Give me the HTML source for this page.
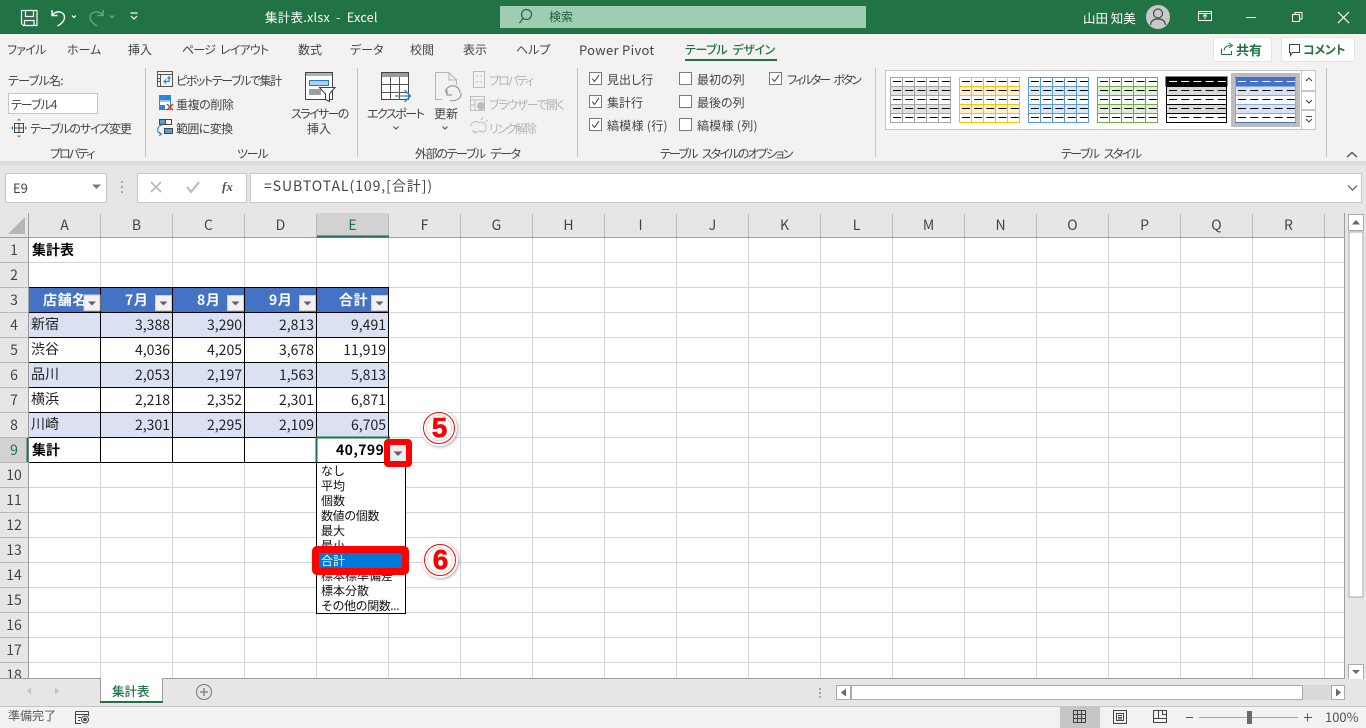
<!DOCTYPE html>
<html lang="ja"><head><meta charset="utf-8"><title>集計表.xlsx - Excel</title>
<style>
html,body{margin:0;padding:0;width:1366px;height:728px;overflow:hidden;background:#fff}
body{position:relative;font-family:"Liberation Sans","Noto Sans CJK JP",sans-serif;font-size:12px;color:#444}
.j,.t{font-family:"Noto Sans CJK JP",sans-serif;font-feature-settings:"palt"}
.t{position:absolute;white-space:nowrap;line-height:16px;height:16px}
.r{position:absolute;left:0;top:0}
.b{position:absolute}
.g{color:#b4b4b4}
.w{color:#fff}
.c{font-size:14px;color:#222;line-height:25px;height:25px;font-feature-settings:normal}
.n{text-align:right}
.h{font-weight:700;color:#fff;font-size:14px;line-height:24px;height:24px;font-feature-settings:normal;text-align:center;letter-spacing:.6px}
.k{font-size:14px;color:#444;text-align:center;line-height:24px;height:24px;font-family:"Noto Sans CJK JP",sans-serif}
.m{font-size:12px;color:#111;line-height:15px;height:15px;left:321px;font-feature-settings:normal}
</style></head><body>

<div class="b" style="left:0;top:0;width:1366px;height:34px;background:#217346"></div>
<div class="b" style="left:500px;top:6px;width:366px;height:22px;background:#9fcdb3"></div>
<div class="b" style="left:0;top:34px;width:1366px;height:127px;background:#f3f2f1"></div>
<div class="b" style="left:0;top:161px;width:1366px;height:52px;background:#e6e6e6"></div>
<div class="b" style="left:0;top:161px;width:1366px;height:4px;background:#dcdcdc"></div>
<div class="b" style="left:5px;top:173px;width:100px;height:28px;background:#fff;border:1px solid #c8c8c8"></div>
<div class="b" style="left:137px;top:173px;width:108px;height:28px;background:#fff;border:1px solid #c8c8c8"></div>
<div class="b" style="left:250px;top:173px;width:1110px;height:28px;background:#fff;border:1px solid #c8c8c8"></div>
<div class="b" style="left:8px;top:93px;width:88px;height:19px;background:#fff;border:1px solid #c6c6c6"></div>
<div class="b" style="left:1213px;top:37px;width:57px;height:23px;background:#fff;border:1px solid #e4e4e4;border-radius:2px"></div>
<div class="b" style="left:1281px;top:37px;width:72px;height:23px;background:#fff;border:1px solid #e4e4e4;border-radius:2px"></div>

<!-- sheet backgrounds -->
<div class="b" style="left:0;top:213px;width:1345px;height:24px;background:#e6e6e6"></div>
<div class="b" style="left:0;top:237px;width:28px;height:442px;background:#e6e6e6"></div>
<div class="b" style="left:317px;top:213px;width:71px;height:24px;background:#d2d2d2"></div>
<div class="b" style="left:0;top:438px;width:28px;height:24px;background:#d2d2d2"></div>
<div class="b" style="left:29px;top:288px;width:359px;height:24px;background:#4472c4"></div>
<div class="b" style="left:29px;top:313px;width:359px;height:24px;background:#d9e1f2"></div>
<div class="b" style="left:29px;top:363px;width:359px;height:24px;background:#d9e1f2"></div>
<div class="b" style="left:29px;top:413px;width:359px;height:24px;background:#d9e1f2"></div>

<svg class="r" width="1366" height="728" viewBox="0 0 1366 728" fill="none">
<!-- grid -->
<path stroke="#d4d4d4" d="M100.5 237V679M172.5 237V679M244.5 237V679M316.5 237V679M388.5 237V679M460.5 237V679M532.5 237V679M604.5 237V679M676.5 237V679M748.5 237V679M820.5 237V679M892.5 237V679M964.5 237V679M1036.5 237V679M1108.5 237V679M1180.5 237V679M1252.5 237V679M1324.5 237V679M28 262.5H1345M28 287.5H1345M28 312.5H1345M28 337.5H1345M28 362.5H1345M28 387.5H1345M28 412.5H1345M28 437.5H1345M28 462.5H1345M28 487.5H1345M28 512.5H1345M28 537.5H1345M28 562.5H1345M28 587.5H1345M28 612.5H1345M28 637.5H1345M28 662.5H1345"/>
<!-- header separators -->
<path stroke="#b8b8b8" d="M100.5 214V237M172.5 214V237M244.5 214V237M316.5 214V237M388.5 214V237M460.5 214V237M532.5 214V237M604.5 214V237M676.5 214V237M748.5 214V237M820.5 214V237M892.5 214V237M964.5 214V237M1036.5 214V237M1108.5 214V237M1180.5 214V237M1252.5 214V237M1324.5 214V237M0 262.5H28M0 287.5H28M0 312.5H28M0 337.5H28M0 362.5H28M0 387.5H28M0 412.5H28M0 437.5H28M0 462.5H28M0 487.5H28M0 512.5H28M0 537.5H28M0 562.5H28M0 587.5H28M0 612.5H28M0 637.5H28M0 662.5H28"/>
<path stroke="#9d9d9d" d="M28.5 213V679M0 237.5H1345"/>
<path fill="#b5b5b5" d="M25 217V234H8Z"/>
<path stroke="#217346" stroke-width="2" d="M317 236.5H389M27.5 438V462"/>
<!-- table lines -->
<path stroke="#000" d="M29 287.5H389M29 312.5H389M29 337.5H389M29 362.5H389M29 387.5H389M29 412.5H389M29 437.5H316M29 462.5H389M100.5 287V463M172.5 287V463M244.5 287V463M316.5 287V463M388.5 287V463"/>
<path stroke="#217346" stroke-width="2" d="M316 437.5H390M316.5 437V462"/>
<!-- right edge -->
<path stroke="#9d9d9d" d="M1344.5 213V679"/>

<!-- title bar icons -->
<g stroke="#fff" stroke-width="1.2">
<path d="M21.5 10.5H37V25.5H23.5L21.5 23.5Z"/><path d="M25.5 10.5V16.5H33.5V10.5M24.5 25.5V20.5H34V25.5"/>
<path d="M52 10V15.5H57.5M52.5 15C55 10.5 64.5 10.5 64.5 17.5C64.5 21 61 24 57.5 26" stroke-width="1.4"/>
<path d="M72 15.5L74 17.5L76 15.5M131 16L134 19L137 16M130.5 13H137.5"/>
</g>
<g stroke="#6ea587" stroke-width="1.3"><path d="M103 10V15.5H97.5M102.5 15C100 10.5 90 10.5 90 17.5C90 21 93.5 24 97 26M110 15.5L112 17.5L114 15.5"/></g>
<circle cx="526.5" cy="14.5" r="5" stroke="#1d6a40" stroke-width="1.2"/><path d="M523 18.5L519.5 23" stroke="#1d6a40" stroke-width="1.3"/>
<circle cx="1158" cy="17" r="12" fill="#c8c8c8"/>
<circle cx="1158" cy="13.5" r="4.5" stroke="#4a4a4a" stroke-width="1.2"/><path d="M1150.5 25C1151 20.5 1154 19 1158 19C1162 19 1165 20.5 1165.5 25" stroke="#4a4a4a" stroke-width="1.2"/>
<g stroke="#fff"><path d="M1198.5 11.5H1211.5V20.5H1198.5ZM1198 13.5H1212M1205 19V15M1203 16.5L1205 14.5L1207 16.5"/><path d="M1246 17.5H1256"/><path d="M1292.5 14.5H1299.5V21.5H1292.5ZM1295 14V12.5H1302V19H1300"/><path d="M1338 12L1349 23M1349 12L1338 23" stroke-width="1.2"/></g>
<path d="M685 60H777" stroke="#217346" stroke-width="2"/>
<!-- share / comment icons -->
<path stroke="#217346" d="M1221.5 48.5V54.5H1231.5V51M1224 50.5C1224.5 47 1227 45.5 1231 45.5M1229 43L1232.5 45.5L1229 48"/>
<path d="M1289.5 44.5H1299.5V52.5H1292.5L1290.5 55.5V52.5H1289.5Z" stroke="#444"/>
<!-- separators -->
<path stroke="#c6c6c6" d="M145.5 68V157M357.5 68V157M577.5 68V157M875.5 68V157M1326.5 68V157"/>
<path d="M1347 157L1352 152.5L1357 157" stroke="#444" stroke-width="1.2"/>
<!-- table size -->
<path stroke="#444" d="M14.5 123.5H23.5V132.5H14.5ZM14.5 128H23.5M19 123.5V132.5"/>
<path fill="#2b88d8" d="M19 118.5L17 120.5H21ZM19 137.5L17 135.5H21ZM11 128L13 126V130ZM27 128L25 126V130Z"/>
<!-- pivot -->
<path stroke="#555" d="M157.5 71.5H172.5V86.5H157.5ZM157.5 74.5H172.5M160.5 74.5V86.5M160.5 78.5H157.5M160.5 81.5H157.5"/>
<path stroke="#2b88d8" stroke-width="1.2" d="M169 77V81.5H164M166 79.5L164 81.5L166 83.5M167.5 78.5L169 76.8L170.5 78.5"/>
<!-- dup -->
<path d="M159.5 95.5H170.5V109.5H159.5Z" fill="#fff" stroke="#2b88d8"/><path fill="#2b88d8" d="M160 96H170V100H160ZM160 105H165V109H160Z"/><path stroke="#2b88d8" d="M159.5 101H170.5"/>
<path stroke="#e0301e" stroke-width="1.4" d="M167 104L173 110M173 104L167 110"/>
<!-- convert -->
<path d="M159.5 119.5H171.5V124.5H159.5ZM165.5 119.5V124.5" stroke="#444"/><path fill="#5a9bd5" d="M160 120H165V124H160Z"/><path d="M164.5 128.5H172.5V133.5H164.5Z" fill="#5a9bd5" stroke="#444"/>
<path stroke="#2b88d8" stroke-width="1.1" d="M162 125C157 126 156 132 161 134M159 136L161.5 134L159 132"/>
<!-- slicer -->
<path d="M305.5 72.5H332.5V99.5H305.5Z" fill="#fff" stroke="#444"/><path fill="#b0b0b0" d="M306 73H332V76H306Z"/>
<path d="M309.5 80.5H328.5V85.5H309.5Z" fill="#a9d1f0" stroke="#2b79c2"/><path fill="#a0a0a0" d="M309 89H321V95H309Z"/>
<path d="M319.5 87.5H335L329.5 94V101.5L325.5 99.5V94Z" fill="#fff" stroke="#444" stroke-width="1.1"/>
<!-- export -->
<path d="M381.5 72.5H408.5V99.5H381.5Z" fill="#fff" stroke="#444"/><path fill="#9a9a9a" d="M382 73H408V77H382Z"/>
<path stroke="#555" d="M381.5 84.5H408.5M381.5 92.5H408.5M390.5 77V99.5M399.5 77V99.5"/>
<path stroke="#2b88d8" stroke-width="1.3" d="M395 96H410M404.5 90L410.5 96L404.5 102" fill="none"/>
<path stroke="#555" stroke-width="1.1" d="M393.5 126.5L396 129L398.5 126.5M442.5 126.5L445 129L447.5 126.5"/>
<!-- refresh -->
<path stroke="#b4b4b4" d="M435.5 72.5H449L456.5 80V85M449 72.5V80H456.5M435.5 72.5V99.5H442"/>
<path stroke="#9a9a9a" stroke-width="1.2" d="M447 94C443 89 450 85 455 86C458 87 460 90 460 93M447 90V95H452M461 93C462 99 454 102 450 100"/>
<!-- greyed items -->
<g stroke="#bdbdbd"><path d="M473.5 71.5H484.5V87.5H473.5ZM476 76H478M476 82H478M480 76H482M480 82H482"/><path d="M470.5 96.5H484.5V110.5H470.5ZM470.5 100H484.5M475 100V110M470.5 105H475"/>
<path d="M471 126C471 122 476 120 479 123C482 121 487 124 486 128C486 132 482 133 480 131C477 133 473 132 472 130M475 134V131M481 120L483 117M485 122L488 120"/></g>
<circle cx="481" cy="106" r="4" fill="#bdbdbd"/>
<!-- checkboxes -->
<g fill="#fff" stroke="#7a7a7a"><path d="M589.5 72.5H601.5V84.5H589.5ZM589.5 95.5H601.5V107.5H589.5ZM589.5 118.5H601.5V130.5H589.5ZM679.5 72.5H691.5V84.5H679.5ZM679.5 95.5H691.5V107.5H679.5ZM679.5 118.5H691.5V130.5H679.5ZM769.5 72.5H781.5V84.5H769.5Z"/></g>
<g stroke="#555" stroke-width="1.1"><path d="M592 78.5L594.5 81.5L599 75M592 101.5L594.5 104.5L599 98M592 124.5L594.5 127.5L599 121M772 78.5L774.5 81.5L779 75"/></g>
<!-- gallery -->
<path d="M885.5 70.5H1301.5V129.5H885.5Z" fill="#fff" stroke="#c6c6c6"/>
<rect x="1231" y="73" width="69" height="54" fill="#bdbdbd"/>
<g stroke="#a5a5a5"><path fill="#e2e2e2" d="M890 86H951V95H890ZM890 104H951V113H890Z" stroke="none"/><path d="M890.5 77.5H950.5V122.5H890.5ZM890.5 86.5H950.5M890.5 95.5H950.5M890.5 104.5H950.5M890.5 113.5H950.5M902.5 77.5V122.5M914.5 77.5V122.5M926.5 77.5V122.5M938.5 77.5V122.5"/></g>
<g stroke="#ffc000"><path fill="#fff0c8" d="M959 86H1020V95H959ZM959 104H1020V113H959Z" stroke="none"/><path d="M959.5 77.5H1019.5V122.5H959.5ZM959.5 86.5H1019.5M959.5 95.5H1019.5M959.5 104.5H1019.5M959.5 113.5H1019.5M971.5 77.5V122.5M983.5 77.5V122.5M995.5 77.5V122.5M1007.5 77.5V122.5"/></g>
<g stroke="#5b9bd5"><path fill="#dbe9f6" d="M1028 86H1089V95H1028ZM1028 104H1089V113H1028Z" stroke="none"/><path d="M1028.5 77.5H1088.5V122.5H1028.5ZM1028.5 86.5H1088.5M1028.5 95.5H1088.5M1028.5 104.5H1088.5M1028.5 113.5H1088.5M1040.5 77.5V122.5M1052.5 77.5V122.5M1064.5 77.5V122.5M1076.5 77.5V122.5"/></g>
<g stroke="#70ad47"><path fill="#e1eed8" d="M1097 86H1158V95H1097ZM1097 104H1158V113H1097Z" stroke="none"/><path d="M1097.5 77.5H1157.5V122.5H1097.5ZM1097.5 86.5H1157.5M1097.5 95.5H1157.5M1097.5 104.5H1157.5M1097.5 113.5H1157.5M1109.5 77.5V122.5M1121.5 77.5V122.5M1133.5 77.5V122.5M1145.5 77.5V122.5"/></g>
<g stroke="#000"><path fill="#000" d="M1166 77H1227V86H1166Z"/><path fill="#d9d9d9" d="M1166 87H1227V95H1166ZM1166 105H1227V113H1166Z" stroke="none"/><path d="M1166.5 77.5H1226.5V122.5H1166.5ZM1166.5 86.5H1226.5M1166.5 95.5H1226.5M1166.5 104.5H1226.5M1166.5 113.5H1226.5"/></g>
<rect x="1235" y="77" width="61" height="46" fill="#fff"/>
<g stroke="#8ea9db"><path fill="#4472c4" stroke="none" d="M1235 77H1296V86H1235Z"/><path fill="#d9e1f2" d="M1235 87H1296V95H1235ZM1235 105H1296V113H1235Z" stroke="none"/><path d="M1235.5 77.5H1295.5V122.5H1235.5ZM1235.5 86.5H1295.5M1235.5 95.5H1295.5M1235.5 104.5H1295.5M1235.5 113.5H1295.5"/></g>
<path stroke="#4472c4" stroke-width="1" d="M1235 122.5H1296M1235 77.5H1296"/>
<g stroke-dasharray="8 4.2" stroke="#000" stroke-width="1">
<path d="M893 81.5H951M893 90.5H951M893 99.5H951M893 108.5H951M893 117.5H951M962 81.5H1020M962 90.5H1020M962 99.5H1020M962 108.5H1020M962 117.5H1020M1031 81.5H1089M1031 90.5H1089M1031 99.5H1089M1031 108.5H1089M1031 117.5H1089M1100 81.5H1158M1100 90.5H1158M1100 99.5H1158M1100 108.5H1158M1100 117.5H1158M1169 90.5H1227M1169 99.5H1227M1169 108.5H1227M1169 117.5H1227M1238 90.5H1296M1238 99.5H1296M1238 108.5H1296M1238 117.5H1296"/>
<path stroke="#fff" d="M1169 81.5H1227M1238 81.5H1296"/>
</g>
<!-- gallery buttons -->
<path d="M1301.5 70.5H1315.5V90.5H1301.5ZM1301.5 91.5H1315.5V109.5H1301.5ZM1301.5 110.5H1315.5V129.5H1301.5Z" fill="#fff" stroke="#c6c6c6"/>
<path stroke="#444" stroke-width="1.1" d="M1306 81L1309 78L1312 81M1306 100L1309 103L1312 100M1306 116.5H1312M1306 119L1309 122L1312 119"/>
<!-- formula bar icons -->
<path fill="#7a7a7a" d="M92 184.5H101L96.5 189Z"/>
<path fill="#a6a6a6" d="M121 181H123V183H121ZM121 186H123V188H121ZM121 191H123V193H121Z"/>
<path stroke="#b8b8b8" stroke-width="1.6" d="M151 182L161 192M161 182L151 192"/>
<path stroke="#b8b8b8" stroke-width="2" d="M187 187L191 192L199 182"/>
<path stroke="#555" stroke-width="1.2" d="M1348 185.5L1352.5 190L1357 185.5"/>
<!-- scrollbars -->
<rect x="1345" y="213" width="21" height="466" fill="#e6e6e6"/>
<rect x="1349" y="232" width="14" height="365" fill="#fff" stroke="#ababab"/>
<rect x="1348.5" y="214.5" width="15" height="16" fill="#fff" stroke="#ababab"/>
<rect x="1348.5" y="664.5" width="15" height="15" fill="#fff" stroke="#ababab"/>
<path fill="#666" d="M1356 220L1352 224.5H1360ZM1356 674L1352 670H1360Z"/>
<rect x="0" y="679" width="1366" height="28" fill="#e6e6e6"/>
<path stroke="#9d9d9d" d="M0 678.5H100M163 678.5H1345"/>
<path stroke="#c6c6c6" d="M0 706.5H1366"/>
<path d="M100.5 678V702M162.5 678V702" stroke="#9d9d9d"/>
<rect x="101" y="678" width="61" height="24" fill="#fff"/>
<rect x="100" y="701" width="63" height="2" fill="#217346"/>
<path fill="#c4c4c4" d="M27 691L31 687.5V694.5ZM59 691L55 687.5V694.5Z"/>
<circle cx="204" cy="692" r="7.5" stroke="#8a8a8a" stroke-width="1.3"/><path stroke="#8a8a8a" stroke-width="1.6" d="M200 692H208M204 688V696"/>
<path fill="#a6a6a6" d="M819 688H821V690H819ZM819 692H821V694H819ZM819 696H821V698H819Z"/>
<rect x="836.5" y="685.5" width="14" height="14" fill="#fff" stroke="#ababab"/>
<rect x="851.5" y="685.5" width="451" height="14" fill="#fff" stroke="#ababab"/>
<rect x="1303" y="685" width="28" height="15" fill="#d9d9d9"/>
<rect x="1331.5" y="685.5" width="13" height="14" fill="#fff" stroke="#ababab"/>
<path fill="#666" d="M841 692.5L846 688.5V696.5ZM1341 692.5L1336 688.5V696.5Z"/>
<!-- status -->
<rect x="0" y="707" width="1366" height="21" fill="#f3f2f1"/>
<rect x="1060" y="707" width="40" height="21" fill="#c6c6c6"/>
<g stroke="#444"><path d="M75.5 711.5H88.5M75.5 711.5V723.5H81M88.5 711.5V716M75.5 714.5H88.5M78 717.5H81M78 720.5H80"/><circle cx="85" cy="719.5" r="3.5"/></g><circle cx="85" cy="719.5" r="1.8" fill="#444"/>
<path stroke="#444" d="M1073.5 710.5H1085.5V722.5H1073.5ZM1073.5 714.5H1085.5M1073.5 718.5H1085.5M1077.5 710.5V722.5M1081.5 710.5V722.5"/>
<path stroke="#444" d="M1113.5 710.5H1126.5V723.5H1113.5ZM1116.5 713.5H1123.5V720.5H1116.5ZM1118 715.5H1122M1118 717.5H1122M1118 719H1122"/>
<path stroke="#444" d="M1153.5 710.5H1166.5V722.5H1153.5ZM1153.5 718.5H1166.5M1158.5 710.5V718.5M1162.5 710.5V714.5H1166.5"/>
<path stroke="#555" d="M1186 717.5H1193M1304 717.5H1312M1307.5 713.5V721.5"/>
<path stroke="#a6a6a6" d="M1199 717.5H1298"/>
<rect x="1247" y="711" width="5" height="13" fill="#6b6b6b"/>
<!-- filter buttons -->
<g fill="#f1f1f6" stroke="#d0d0d0">
<rect x="84" y="295" width="16" height="15.5"/><rect x="155.5" y="295.5" width="16" height="15"/><rect x="227.5" y="295.5" width="16" height="15"/><rect x="299.5" y="295.5" width="16" height="15"/><rect x="371.5" y="295.5" width="16" height="15"/>
</g>
<path fill="#606060" d="M88 301.5H96L92 305.5ZM159.5 301.5H167.5L163.5 305.5ZM231.5 301.5H239.5L235.5 305.5ZM303.5 301.5H311.5L307.5 305.5ZM375.5 301.5H383.5L379.5 305.5Z"/>
</svg>

<!-- title bar text -->
<span class="t w" style="left:265px;top:9px;font-size:12.5px;letter-spacing:.27px">集計表.xlsx&nbsp; -&nbsp; Excel</span>
<span class="t" style="left:549px;top:9px;color:#1d5f3a;font-size:12px">検索</span>
<span class="t w" style="left:1083px;top:10px;font-size:12.5px">山田 知美</span>

<!-- tabs -->
<span class="t" style="left:7px;top:42px;letter-spacing:-.75px">ファイル</span>
<span class="t" style="left:67px;top:42px">ホーム</span>
<span class="t" style="left:128px;top:42px">挿入</span>
<span class="t" style="left:182px;top:42px;letter-spacing:-.8px;word-spacing:3px">ページ レイアウト</span>
<span class="t" style="left:298px;top:42px">数式</span>
<span class="t" style="left:350px;top:42px">データ</span>
<span class="t" style="left:410px;top:42px">校閲</span>
<span class="t" style="left:463px;top:42px">表示</span>
<span class="t" style="left:516px;top:42px">ヘルプ</span>
<span class="t" style="left:579px;top:42px;font-size:13px;letter-spacing:.3px">Power Pivot</span>
<span class="t" style="left:685px;top:42px;color:#217346;font-weight:500;letter-spacing:-.4px;word-spacing:3px">テーブル デザイン</span>
<span class="t" style="left:1236px;top:42px;color:#217346;font-weight:700;font-size:13px">共有</span>
<span class="t" style="left:1303px;top:42px;color:#217346;font-weight:700;letter-spacing:-.3px">コメント</span>

<!-- ribbon -->
<span class="t" style="left:8px;top:73px;letter-spacing:-.7px">テーブル名:</span>
<span class="t" style="left:11px;top:97px;letter-spacing:-1px">テーブル4</span>
<span class="t" style="left:30px;top:121px;letter-spacing:-1.1px">テーブルのサイズ変更</span>
<span class="t" style="left:176px;top:73px;letter-spacing:-1.4px">ピボットテーブルで集計</span>
<span class="t" style="left:176px;top:97px;letter-spacing:-.4px">重複の削除</span>
<span class="t" style="left:176px;top:121px;letter-spacing:-.6px">範囲に変換</span>
<span class="t" style="left:291px;top:106px;letter-spacing:-1.6px">スライサーの</span>
<span class="t" style="left:307px;top:121px">挿入</span>
<span class="t" style="left:367px;top:106px;letter-spacing:-1.5px">エクスポート</span>
<span class="t" style="left:434px;top:106px">更新</span>
<span class="t g" style="left:489px;top:73px;letter-spacing:-2px">プロパティ</span>
<span class="t g" style="left:489px;top:97px;letter-spacing:-1.4px">ブラウザーで開く</span>
<span class="t g" style="left:489px;top:121px;letter-spacing:-1.8px">リンク解除</span>
<span class="t" style="left:607px;top:72px">見出し行</span>
<span class="t" style="left:607px;top:95px">集計行</span>
<span class="t" style="left:607px;top:118px;letter-spacing:.3px">縞模様 (行)</span>
<span class="t" style="left:697px;top:72px">最初の列</span>
<span class="t" style="left:697px;top:95px">最後の列</span>
<span class="t" style="left:697px;top:118px;letter-spacing:.3px">縞模様 (列)</span>
<span class="t" style="left:787px;top:72px;letter-spacing:-2.15px;word-spacing:4px">フィルター ボタン</span>
<span class="t" style="left:50px;top:146px;letter-spacing:-2px">プロパティ</span>
<span class="t" style="left:237px;top:146px;letter-spacing:-1.2px">ツール</span>
<span class="t" style="left:415px;top:146px;letter-spacing:-1.35px;word-spacing:4px">外部のテーブル データ</span>
<span class="t" style="left:660px;top:146px;letter-spacing:-1.75px;word-spacing:4px">テーブル スタイルのオプション</span>
<span class="t" style="left:1061px;top:146px;letter-spacing:-1.55px;word-spacing:4px">テーブル スタイル</span>

<!-- formula bar -->
<span class="t" style="left:13px;top:180px;font-size:13px">E9</span>
<span class="t" style="left:222px;top:179px;font-family:'Liberation Serif',serif;font-style:italic;font-weight:700;font-size:13px;color:#555">fx</span>
<span class="t" style="left:264px;top:178px;font-size:14px;letter-spacing:.95px;font-feature-settings:normal">=SUBTOTAL(109,[合計])</span>

<!-- column headers -->
<span class="t k" style="left:29px;top:213px;width:71px">A</span>
<span class="t k" style="left:101px;top:213px;width:71px">B</span>
<span class="t k" style="left:173px;top:213px;width:71px">C</span>
<span class="t k" style="left:245px;top:213px;width:71px">D</span>
<span class="t k" style="left:317px;top:213px;width:71px;color:#217346">E</span>
<span class="t k" style="left:389px;top:213px;width:71px">F</span>
<span class="t k" style="left:461px;top:213px;width:71px">G</span>
<span class="t k" style="left:533px;top:213px;width:71px">H</span>
<span class="t k" style="left:605px;top:213px;width:71px">I</span>
<span class="t k" style="left:677px;top:213px;width:71px">J</span>
<span class="t k" style="left:749px;top:213px;width:71px">K</span>
<span class="t k" style="left:821px;top:213px;width:71px">L</span>
<span class="t k" style="left:893px;top:213px;width:71px">M</span>
<span class="t k" style="left:965px;top:213px;width:71px">N</span>
<span class="t k" style="left:1037px;top:213px;width:71px">O</span>
<span class="t k" style="left:1109px;top:213px;width:71px">P</span>
<span class="t k" style="left:1181px;top:213px;width:71px">Q</span>
<span class="t k" style="left:1253px;top:213px;width:71px">R</span>
<!-- row headers -->
<span class="t k" style="left:0;top:238px;width:28px">1</span>
<span class="t k" style="left:0;top:263px;width:28px">2</span>
<span class="t k" style="left:0;top:288px;width:28px">3</span>
<span class="t k" style="left:0;top:313px;width:28px">4</span>
<span class="t k" style="left:0;top:338px;width:28px">5</span>
<span class="t k" style="left:0;top:363px;width:28px">6</span>
<span class="t k" style="left:0;top:388px;width:28px">7</span>
<span class="t k" style="left:0;top:413px;width:28px">8</span>
<span class="t k" style="left:0;top:438px;width:28px;color:#217346">9</span>
<span class="t k" style="left:0;top:463px;width:28px">10</span>
<span class="t k" style="left:0;top:488px;width:28px">11</span>
<span class="t k" style="left:0;top:513px;width:28px">12</span>
<span class="t k" style="left:0;top:538px;width:28px">13</span>
<span class="t k" style="left:0;top:563px;width:28px">14</span>
<span class="t k" style="left:0;top:588px;width:28px">15</span>
<span class="t k" style="left:0;top:613px;width:28px">16</span>
<span class="t k" style="left:0;top:638px;width:28px">17</span>
<div class="b" style="left:0;top:663px;width:28px;height:15px;overflow:hidden"><span class="t k" style="left:0;top:0;width:28px">18</span></div>

<!-- cells -->
<span class="t c" style="left:32px;top:238px;font-weight:700;color:#000">集計表</span>
<span class="t h" style="left:43px;top:288px;width:41px;overflow:hidden">店舗名</span>
<span class="t h" style="left:125px;top:288px">7月</span>
<span class="t h" style="left:197px;top:288px">8月</span>
<span class="t h" style="left:269px;top:288px">9月</span>
<span class="t h" style="left:339px;top:288px">合計</span>
<span class="t c" style="left:31px;top:312px">新宿</span>
<span class="t c" style="left:31px;top:337px">渋谷</span>
<span class="t c" style="left:31px;top:362px">品川</span>
<span class="t c" style="left:31px;top:387px">横浜</span>
<span class="t c" style="left:31px;top:412px">川崎</span>
<span class="t c" style="left:32px;top:438px;font-weight:700;color:#000">集計</span>

<span class="t c n" style="left:101px;width:69px;top:313px">3,388</span><span class="t c n" style="left:173px;width:69px;top:313px">3,290</span><span class="t c n" style="left:245px;width:69px;top:313px">2,813</span><span class="t c n" style="left:317px;width:69px;top:313px">9,491</span>
<span class="t c n" style="left:101px;width:69px;top:338px">4,036</span><span class="t c n" style="left:173px;width:69px;top:338px">4,205</span><span class="t c n" style="left:245px;width:69px;top:338px">3,678</span><span class="t c n" style="left:317px;width:69px;top:338px">11,919</span>
<span class="t c n" style="left:101px;width:69px;top:363px">2,053</span><span class="t c n" style="left:173px;width:69px;top:363px">2,197</span><span class="t c n" style="left:245px;width:69px;top:363px">1,563</span><span class="t c n" style="left:317px;width:69px;top:363px">5,813</span>
<span class="t c n" style="left:101px;width:69px;top:388px">2,218</span><span class="t c n" style="left:173px;width:69px;top:388px">2,352</span><span class="t c n" style="left:245px;width:69px;top:388px">2,301</span><span class="t c n" style="left:317px;width:69px;top:388px">6,871</span>
<span class="t c n" style="left:101px;width:69px;top:413px">2,301</span><span class="t c n" style="left:173px;width:69px;top:413px">2,295</span><span class="t c n" style="left:245px;width:69px;top:413px">2,109</span><span class="t c n" style="left:317px;width:69px;top:413px">6,705</span>
<span class="t c" style="left:336px;top:438px;font-weight:700;color:#000;letter-spacing:.4px">40,799</span>

<!-- dropdown -->
<div class="b" style="left:316px;top:462px;width:88px;height:150px;background:#fff;border:1px solid #000"></div>
<span class="t m" style="top:463px">なし</span>
<span class="t m" style="top:478px">平均</span>
<span class="t m" style="top:493px">個数</span>
<span class="t m" style="top:508px;letter-spacing:-.4px">数値の個数</span>
<span class="t m" style="top:523px">最大</span>
<span class="t m" style="top:538px">最小</span>
<div class="b" style="left:319px;top:553px;width:84px;height:15px;background:#0078d7"></div>
<span class="t m" style="top:553px;color:#fff">合計</span>
<span class="t m" style="top:568px">標本標準偏差</span>
<span class="t m" style="top:583px">標本分散</span>
<span class="t m" style="top:598px;letter-spacing:-.45px">その他の関数...</span>

<!-- red highlights -->
<div class="b" style="left:312px;top:546px;width:83px;height:15px;border:7px solid #f00;border-radius:5px"></div>
<div class="b" style="left:384px;top:439px;width:16px;height:16px;border:6px solid #f00;border-radius:4px;background:#eeeef2"></div>
<svg class="r" width="1366" height="728" viewBox="0 0 1366 728" fill="none" style="pointer-events:none">
<path fill="#606060" d="M393.5 451.5H402.5L398 456Z"/>
<defs><filter id="s" x="-30%" y="-30%" width="160%" height="160%"><feDropShadow dx="1" dy="1" stdDeviation="1.5" flood-color="#000" flood-opacity=".35"/></filter></defs>
<circle cx="439" cy="428" r="18" fill="#fff" filter="url(#s)"/>
<circle cx="439" cy="428" r="15.5" stroke="#f00" stroke-width="1"/>
<circle cx="439" cy="428" r="12.5" stroke="#dcdcdc" stroke-width="1"/>
<circle cx="440" cy="560" r="18" fill="#fff" filter="url(#s)"/>
<circle cx="440" cy="560" r="15.5" stroke="#f00" stroke-width="1"/>
<circle cx="440" cy="560" r="12.5" stroke="#dcdcdc" stroke-width="1"/>
<text x="439.5" y="437" text-anchor="middle" font-family="Liberation Sans" font-weight="700" font-size="28" fill="#f00" stroke="#f00" stroke-width=".6">5</text>
<text x="440.5" y="569" text-anchor="middle" font-family="Liberation Sans" font-weight="700" font-size="28" fill="#f00" stroke="#f00" stroke-width=".6">6</text>
</svg>

<!-- sheet tab + status text -->
<span class="t" style="left:112px;top:683px;color:#217346;font-weight:500;font-size:12.5px">集計表</span>
<span class="t" style="left:8px;top:708px;color:#555">準備完了</span>
<span class="t" style="left:1325px;top:709px;font-size:13px;color:#555;font-feature-settings:normal">100%</span>
</body></html>
